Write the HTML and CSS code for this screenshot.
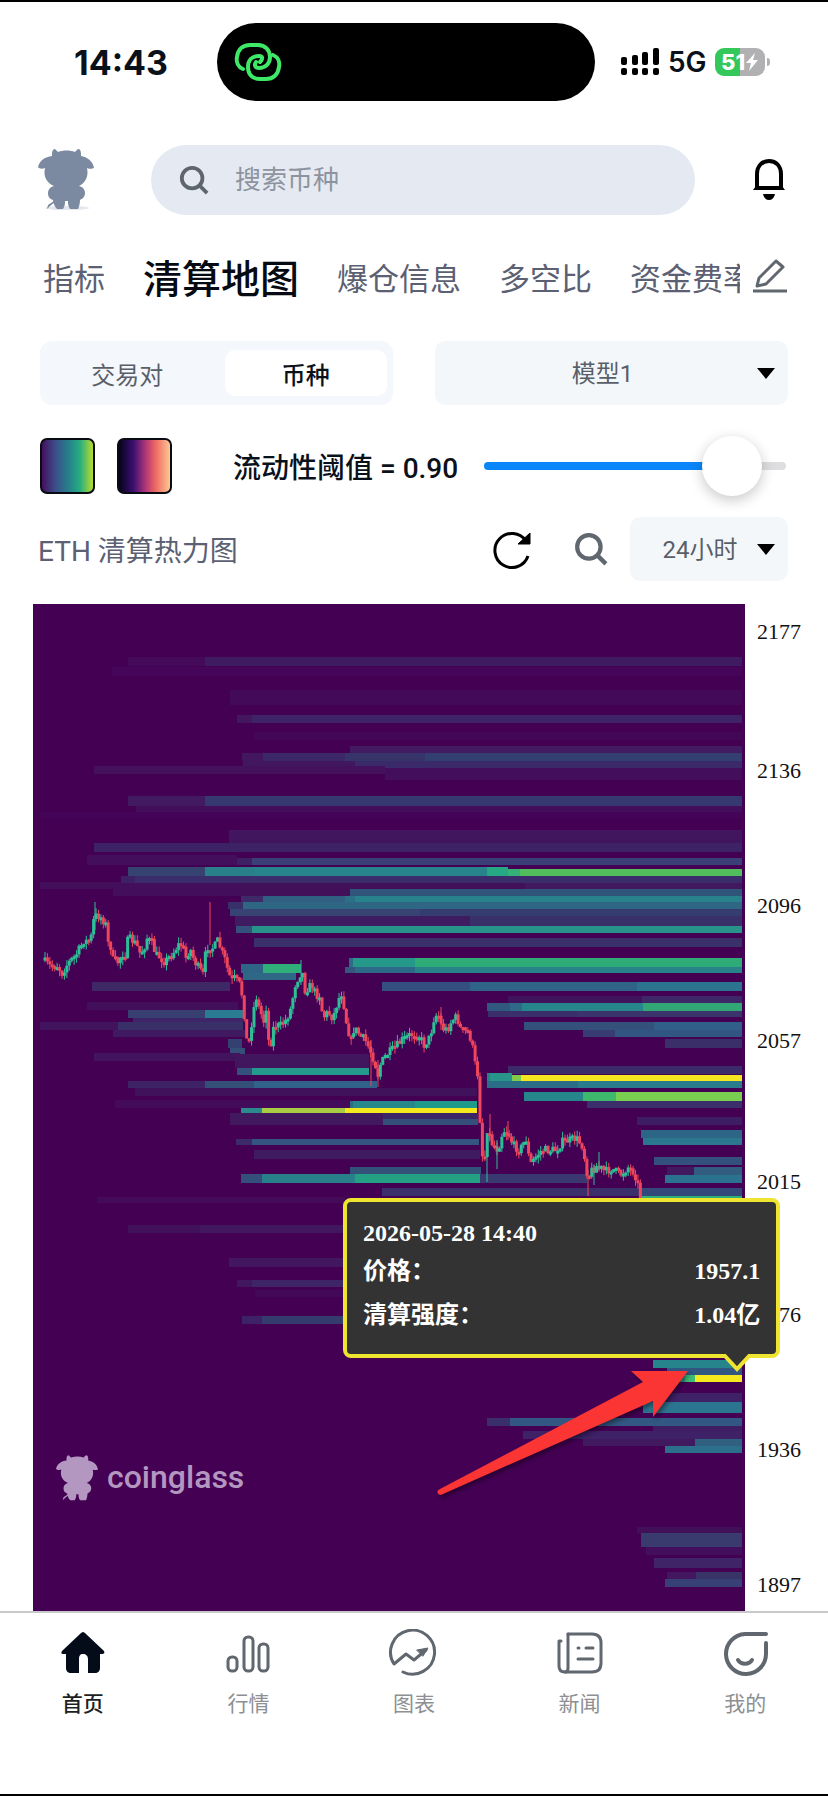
FILE: index.html
```html
<!DOCTYPE html>
<html lang="zh-CN">
<head>
  <meta charset="UTF-8">
  <meta name="viewport" content="width=device-width, initial-scale=1">
  <title>清算地图</title>
  <link rel="stylesheet" href="styles.css">
</head>
<body>
  <svg class="defs" width="0" height="0" aria-hidden="true">
    <symbol id="mascot" viewBox="0 0 56 62">
      <path d="M14 5C14 2 15 0 17 0C18 1 19 2 20 3C25 1 32 1 37 3C38 2 39 0 41 0C43 1 43 4 43 7C49 8 55 12 56 19C54 20 50 20 49 19C51 28 47 34 41 37C45 38 47 41 47 44C47 48 44 50 42 51C42 54 41 58 40 60L32 60C30 57 30 54 30 52L27 52C27 54 27 57 25 60L19 60C17 58 15 54 15 51C12 50 10 48 10 44C10 41 12 38 16 37C9 34 5 28 7 19C5 20 1 20 0 18C2 11 7 8 14 7Z"/>
      <path d="M17 53L12 57L9 60L10 56L16 52Z"/>
    </symbol>
    <symbol id="search" viewBox="0 0 32 32">
      <circle cx="14" cy="14" r="11" fill="none" stroke="currentColor" stroke-width="4"/>
      <path d="M22 22L30 30" stroke="currentColor" stroke-width="4"/>
    </symbol>
  </svg>

  <div class="status-bar">
    <span class="time">14:43</span>
    <div class="island">
      <svg width="48" height="38" viewBox="0 0 48 38" fill="none" stroke="#3fe968" stroke-width="4" stroke-linecap="round">
        <path d="M9 26C4 24 2 19 3 14C4 6 9 2 16 2H24C31 2 36 7 36 14C36 21 31 25 25 25C21 25 20 22 22 19"/>
        <path d="M39 12C44 14 46 19 45 24C44 32 39 36 32 36H26C18 36 14 31 14 24C14 17 18 13 25 13C29 13 29 16 26 19"/>
      </svg>
    </div>
    <div class="signal-group">
      <svg width="40" height="28" viewBox="0 0 40 28">
        <rect x="1" y="9" width="6" height="8" rx="2"/><rect x="12" y="7" width="6" height="10" rx="2"/>
        <rect x="22" y="4" width="6" height="13" rx="2"/><rect x="33" y="0" width="6" height="17" rx="2"/>
        <rect x="1" y="20" width="6" height="7" rx="2"/><rect x="12" y="20" width="6" height="7" rx="2"/>
        <rect x="22" y="20" width="6" height="7" rx="2"/><rect x="33" y="20" width="6" height="7" rx="2"/>
      </svg>
      <span class="network">5G</span>
      <div class="battery">
        <span>51</span>
        <svg width="12" height="18" viewBox="0 0 12 18"><path d="M9 0L0 10H5L3 18L12 7H7Z" fill="#fff"/></svg>
      </div>
    </div>
  </div>

  <header class="top-row">
    <a href="#" class="avatar" aria-label="coinglass">
      <svg width="56" height="62" viewBox="0 0 56 62">
        <ellipse cx="29" cy="59" rx="22" ry="2" fill="#e4e6ee"/>
        <use href="#mascot"/>
      </svg>
    </a>
    <label class="search-box">
      <svg width="30" height="30"><use href="#search"/></svg>
      <input type="text" placeholder="搜索币种" aria-label="搜索币种">
    </label>
    <button class="icon-btn" aria-label="通知">
      <svg width="34" height="42" viewBox="0 0 34 42">
        <path d="M5 30V15C5 7 10 2 17 2S29 7 29 15V30" fill="none" stroke="#000" stroke-width="4"/>
        <path d="M1 31L4 27H30L33 31Z"/>
        <path d="M11 35H23C22 39 20 41 17 41S12 39 11 35Z"/>
      </svg>
    </button>
  </header>

  <nav class="tabs">
    <div class="tab-list">
      <a href="#">指标</a>
      <a href="#" class="current">清算地图</a>
      <a href="#">爆仓信息</a>
      <a href="#">多空比</a>
      <a href="#">资金费率</a>
    </div>
    <button class="icon-btn" aria-label="编辑">
      <svg width="36" height="36" viewBox="0 0 36 36" fill="none" stroke="#61676e" stroke-width="3">
        <path d="M7 20L24 3L31 9L14 26L5 28Z" stroke-linejoin="round"/>
        <path d="M1 33H35"/>
      </svg>
    </button>
  </nav>

  <main>
    <div class="filters">
      <div class="segment">
        <button>交易对</button>
        <button class="on">币种</button>
      </div>
      <div class="select-wrap">
        <select aria-label="模型"><option>模型1</option><option>模型2</option></select>
      </div>
    </div>

    <div class="threshold">
      <button class="swatch viridis" aria-label="Viridis"></button>
      <button class="swatch magma" aria-label="Magma"></button>
      <label for="threshold">流动性阈值 = 0.90</label>
      <input type="range" id="threshold" min="0" max="1" step="0.01" value="0.9">
    </div>

    <div class="chart-head">
      <h1>ETH 清算热力图</h1>
      <button class="icon-btn" aria-label="刷新">
        <svg width="40" height="40" viewBox="0 0 40 40">
          <path d="M34 12A17 17 0 1 0 36 27" fill="none" stroke="#000" stroke-width="3"/>
          <path d="M26 15L38 4V15Z" stroke="#000" stroke-width="1"/>
        </svg>
      </button>
      <button class="icon-btn gray" aria-label="搜索"><svg width="34" height="34"><use href="#search"/></svg></button>
      <div class="select-wrap range">
        <select aria-label="时间范围"><option>24小时</option><option>12小时</option></select>
      </div>
    </div>

    <div class="chart">
      <svg id="heatmap" viewBox="33 604 795 1007">
        <rect x="33" y="604" width="712" height="1007" fill="#440154"/>
        <g id="bands"></g>
        <g id="candles"></g>
        <g fill="#b497c0">
          <svg x="56" y="1455" width="42" height="47"><use href="#mascot"/></svg>
          <text x="107" y="1488" class="brand">coinglass</text>
        </g>
        <g id="axis"></g>
        <path class="arrow" d="M440 1489L643 1382L631 1371H688L653 1417V1401L443 1494C438 1497 435 1491 440 1489Z"/>
      </svg>

      <div class="tooltip">
        <div class="tip-title">2026-05-28 14:40</div>
        <div class="tip-row"><span>价格：</span><span>1957.1</span></div>
        <div class="tip-row"><span>清算强度：</span><span>1.04亿</span></div>
        <svg class="pointer" width="30" height="22" viewBox="0 0 30 22">
          <path d="M3 0H27V4L15 16L3 4Z" fill="#333"/>
          <path d="M2 3L15 17L28 3" fill="none" stroke="#efe430" stroke-width="4"/>
        </svg>
      </div>
    </div>
  </main>

  <nav class="bottom-nav">
    <a href="#" class="current">
      <svg width="48" height="48" viewBox="0 0 48 48">
        <path d="M24 3C25 3 26 4 27 5L45 22C46 24 45 25 43 25H41V39C41 42 39 44 36 44H29V30C29 27 27 25 24 25S20 27 20 30V44H12C9 44 7 42 7 39V25H4C2 25 2 24 3 22L21 5C22 4 23 3 24 3Z" fill="#030c18"/>
      </svg>
      首页
    </a>
    <a href="#">
      <svg width="48" height="48" viewBox="0 0 48 48" fill="none" stroke="#61676e" stroke-width="3">
        <rect x="4" y="28" width="9" height="14" rx="4"/>
        <rect x="20" y="8" width="9" height="34" rx="4"/>
        <rect x="35" y="15" width="9" height="27" rx="4"/>
      </svg>
      行情
    </a>
    <a href="#">
      <svg width="52" height="48" viewBox="0 0 52 48" fill="none" stroke="#61676e" stroke-width="3" stroke-linecap="round" stroke-linejoin="round">
        <path d="M15 42A22 22 0 1 0 6 34L18 24L26 30L38 20" transform="translate(0 1)"/>
        <path d="M29 21L40 19L35 27Z" fill="#61676e" stroke-width="1"/>
      </svg>
      图表
    </a>
    <a href="#">
      <svg width="50" height="48" viewBox="0 0 50 48" fill="none" stroke="#61676e" stroke-width="3" stroke-linecap="round" stroke-linejoin="round">
        <path d="M13 5H37C43 5 46 8 46 14V34C46 40 43 43 37 43H10C6 43 4 41 4 37V12H6"/>
        <path d="M13 5V39C13 41 12 43 10 43"/>
        <path d="M23 19H24M31 19H38M23 30H38"/>
      </svg>
      新闻
    </a>
    <a href="#">
      <svg width="48" height="48" viewBox="0 0 48 48" fill="none" stroke="#61676e" stroke-width="4" stroke-linecap="round">
        <path d="M45 5H24A20 20 0 1 0 45 25V14"/>
        <path d="M17 31C20 36 28 36 31 31"/>
      </svg>
      我的
    </a>
  </nav>

  <script src="chart.js"></script>
</body>
</html>
```
FILE: styles.css
```css
* {
  box-sizing: border-box;
}

body {
  margin: 0;
  min-height: 100vh;
  display: flex;
  flex-direction: column;
  background: #fff;
  border-top: 2px solid #000;
  border-bottom: 2px solid #000;
  font-family: Roboto, "Noto Sans CJK SC", sans-serif;
  color: #0b111b;
}

button,
input,
select {
  font: inherit;
  color: inherit;
  border: 0;
  padding: 0;
  margin: 0;
  background: none;
}

a {
  color: inherit;
  text-decoration: none;
}

svg {
  display: block;
}

.defs {
  position: absolute;
}

.icon-btn {
  display: flex;
  flex: none;
  color: #000;
}

.icon-btn.gray {
  color: #61676e;
}

/* status bar */
.status-bar {
  display: grid;
  grid-template-columns: 217px 1fr 233px;
  align-items: center;
  height: 120px;
  font-family: Inter, sans-serif;
}

.time {
  padding-left: 25px;
  text-align: center;
  font-size: 34px;
  font-weight: 700;
}

.island {
  display: flex;
  align-items: center;
  height: 78px;
  padding-left: 17px;
  border-radius: 39px;
  background: #000;
}

.signal-group {
  display: flex;
  align-items: center;
  gap: 8px;
  padding-left: 25px;
}

.network {
  font-size: 28px;
  font-weight: 600;
}

.battery {
  position: relative;
  display: flex;
  align-items: center;
  justify-content: center;
  gap: 1px;
  width: 50px;
  height: 28px;
  border-radius: 9px;
  background: linear-gradient(90deg, #34c759 51%, #b1b1b3 51%);
  color: #fff;
  font-size: 22px;
  font-weight: 800;
}

.battery::after {
  content: "";
  position: absolute;
  right: -5px;
  top: 10px;
  width: 3px;
  height: 8px;
  border-radius: 0 4px 4px 0;
  background: #b1b1b3;
}

/* search row */
.top-row {
  display: flex;
  align-items: center;
  margin-top: 23px;
  padding: 0 42px 0 38px;
}

.avatar {
  fill: #7b8aa0;
}

.search-box {
  flex: 1;
  display: flex;
  align-items: center;
  gap: 26px;
  height: 70px;
  margin: 0 57px;
  padding: 0 28px;
  border-radius: 35px;
  background: #e5eaf2;
  color: #5d656f;
}

.search-box input {
  flex: 1;
  min-width: 0;
  font-size: 26px;
  outline: none;
}

.search-box input::placeholder {
  color: #8d94a0;
}

/* tabs */
.tabs {
  display: flex;
  align-items: center;
  gap: 12px;
  height: 64px;
  margin-top: 29px;
  padding: 0 40px 0 43px;
}

.tab-list {
  flex: 1;
  display: flex;
  align-items: center;
  gap: 38px;
  overflow: hidden;
  white-space: nowrap;
  font-size: 31px;
  color: #5b6072;
}

.tab-list .current {
  font-size: 39px;
  font-weight: 500;
  color: #060a12;
}

/* filters */
.filters {
  display: grid;
  grid-template-columns: 1fr 1fr;
  gap: 42px;
  margin-top: 33px;
  padding: 0 40px;
}

.segment {
  display: grid;
  grid-template-columns: 1fr 1fr;
  gap: 16px;
  height: 64px;
  padding: 9px 6px;
  border-radius: 12px;
  background: #f4f7fb;
  font-size: 24px;
  color: #595f69;
}

.segment button {
  border-radius: 10px;
}

.segment .on {
  background: #fff;
  color: #0b111b;
  font-weight: 500;
}

.select-wrap {
  position: relative;
  height: 64px;
  border-radius: 10px;
  background: #f4f7fa;
  font-size: 24px;
  color: #595f69;
}

.select-wrap::after {
  content: "";
  position: absolute;
  right: 13px;
  top: 27px;
  width: 18px;
  height: 11px;
  background: #000;
  clip-path: polygon(0 0, 100% 0, 50% 100%);
  pointer-events: none;
}

.select-wrap select {
  appearance: none;
  width: 100%;
  height: 100%;
  text-align: center;
  text-align-last: center;
  padding: 2px 18px 0 0;
}

.range {
  flex: none;
  width: 158px;
}

/* threshold */
.threshold {
  display: flex;
  align-items: center;
  margin-top: 31px;
  padding: 0 42px 0 40px;
}

.swatch {
  width: 55px;
  height: 56px;
  margin-right: 22px;
  border: 2px solid #0a0c14;
  border-radius: 7px;
}

.viridis {
  background: linear-gradient(90deg, #440f5c, #3c4c88 25%, #27808c 52%, #25ac80 74%, #b8dc30);
}

.magma {
  background: linear-gradient(90deg, #05041a, #3a0f70 28%, #b03578 52%, #ee6a62 72%, #fdc796);
}

.threshold label {
  margin-left: 39px;
  margin-right: 26px;
  font-size: 28px;
  font-weight: 500;
  white-space: nowrap;
}

.threshold input {
  appearance: none;
  flex: 1;
  min-width: 0;
  height: 60px;
}

.threshold input::-webkit-slider-runnable-track {
  height: 8px;
  border-radius: 4px;
  background: linear-gradient(90deg, #0a86fb 82%, #dedee0 82%);
}

.threshold input::-webkit-slider-thumb {
  appearance: none;
  width: 60px;
  height: 60px;
  margin-top: -26px;
  border-radius: 50%;
  background: #fff;
  box-shadow: 0 4px 14px rgba(0, 0, 0, 0.22);
}

/* chart title row */
.chart-head {
  display: flex;
  align-items: center;
  margin-top: 21px;
  padding: 0 40px 0 38px;
}

.chart-head h1 {
  flex: 1;
  margin: 0;
  font-size: 28px;
  font-weight: 400;
  color: #5b6072;
}

.chart-head .icon-btn {
  margin-right: 42px;
}

.chart-head .icon-btn.gray {
  margin-right: 22px;
}

/* chart */
.chart {
  position: relative;
  margin: 23px 0 0 33px;
}

#heatmap {
  width: 100%;
  height: auto;
}

#axis {
  font: 22px "Liberation Serif", serif;
  fill: #111;
}

.brand {
  font-family: Roboto, sans-serif;
  font-size: 32px;
  font-weight: 500;
}

.arrow {
  fill: #fb3434;
  filter: drop-shadow(2px 3px 2px rgba(0, 0, 0, 0.4));
}

.tooltip {
  position: absolute;
  right: 6%;
  top: 59%;
  width: 55%;
  height: 160px;
  padding: 15px 16px;
  border: 4px solid #efe430;
  border-radius: 8px;
  background: #333;
  color: #fff;
  font: 700 24px "Liberation Serif", "Noto Sans CJK SC", serif;
}

.tip-title {
  line-height: 32px;
}

.tip-row {
  display: flex;
  justify-content: space-between;
  line-height: 44px;
}

.pointer {
  position: absolute;
  right: 24px;
  top: 150px;
}

/* bottom nav */
.bottom-nav {
  display: flex;
  flex: 1;
  padding-top: 16px;
  border-top: 2px solid #c9c9cb;
}

.bottom-nav a {
  flex: 1;
  display: flex;
  flex-direction: column;
  align-items: center;
  gap: 10px;
  font-size: 21px;
  color: #8d8f92;
}

.bottom-nav .current {
  color: #1c1f24;
  font-weight: 500;
}
```
FILE: chart.js
```js
const NS = 'http://www.w3.org/2000/svg';
const RIGHT = 742;

// y, height, end x, then pairs of start x and colour
const bands = [
  [657, 9, RIGHT, 128, '#450b5a', 205, '#3f1c62'],
  [667, 9, RIGHT, 112, '#450558'],
  [690, 15, RIGHT, 230, '#420a58'],
  [715, 8, RIGHT, 237, '#43175e', 252, '#3e2366'],
  [732, 8, RIGHT, 254, '#440656'],
  [746, 7, RIGHT, 350, '#421b63'],
  [753, 8, RIGHT, 242, '#42175f', 263, '#3c2868', 345, '#363468', 425, '#333f71'],
  [761, 7, RIGHT, 243, '#41175f', 355, '#3b2a69'],
  [766, 8, 385, 94, '#44125c'],
  [768, 12, RIGHT, 385, '#430f5c'],
  [796, 10, RIGHT, 128, '#421a61', 205, '#36396f'],
  [806, 7, RIGHT, 136, '#430f5c'],
  [812, 6, RIGHT, 40, '#440457'],
  [830, 13, RIGHT, 229, '#41165e'],
  [843, 9, RIGHT, 94, '#3d2366'],
  [855, 10, 237, 87, '#430e5b'],
  [858, 7, RIGHT, 237, '#3e2065', 252, '#3a3f77'],
  [867, 9, 508, 128, '#36426f', 205, '#29808a', 254, '#27848c', 487, '#27a884'],
  [869, 7, RIGHT, 508, '#34b078', 520, '#52bd5c'],
  [876, 7, RIGHT, 121, '#3e2065', 135, '#3b2d6b'],
  [882, 7, 120, 40, '#430f5b'],
  [883, 6, RIGHT, 113, '#430f5c', 240, '#421059', 525, '#40195f'],
  [889, 7, RIGHT, 113, '#430f5c', 240, '#421059', 350, '#30557b'],
  [896, 6, RIGHT, 241, '#3e2a69', 263, '#315f82', 345, '#2c7088', 355, '#27828c'],
  [902, 7, RIGHT, 228, '#3a3069', 243, '#2f6684'],
  [909, 7, RIGHT, 230, '#364373', 420, '#353d70'],
  [916, 10, RIGHT, 235, '#3f1c62', 470, '#392f69'],
  [926, 7, RIGHT, 236, '#33517a', 252, '#28938a'],
  [938, 9, RIGHT, 254, '#3a316b'],
  [958, 9, RIGHT, 349, '#2b6d85', 353, '#26988a', 415, '#2fab78'],
  [967, 6, RIGHT, 345, '#355681', 355, '#2c6a87', 415, '#27828a'],
  [964, 9, 301, 241, '#2e6486', 263, '#2fae7a'],
  [973, 7, 296, 243, '#2f6886'],
  [982, 9, 230, 92, '#3e2865'],
  [982, 9, RIGHT, 382, '#335080', 470, '#2f6488', 637, '#2c7390'],
  [1002, 8, 238, 87, '#420f5b'],
  [1010, 8, 243, 128, '#374070', 205, '#2a7c92'],
  [1018, 5, 243, 133, '#3e2468'],
  [1022, 8, 243, 40, '#42145d', 118, '#3a3069'],
  [1030, 7, 245, 113, '#401a60'],
  [1039, 9, 242, 228, '#344170'],
  [1048, 6, 245, 230, '#355078'],
  [1053, 8, 240, 94, '#42145d'],
  [1054, 14, 369, 235, '#41165e'],
  [1068, 7, 369, 237, '#33517a', 252, '#239a8b'],
  [1081, 7, 377, 128, '#3d2366', 205, '#345078', 254, '#30628a'],
  [1088, 8, 477, 135, '#41125c'],
  [1100, 8, 350, 115, '#430b5a'],
  [1101, 7, 477, 350, '#2b6d85', 353, '#27888c', 415, '#1f9a8a'],
  [1108, 5, 477, 241, '#2a8a8c', 262, '#a9cc45', 345, '#f5e81f'],
  [1113, 12, 478, 230, '#42185f', 383, '#3b2668'],
  [1119, 6, 478, 383, '#34507a'],
  [1139, 6, 479, 236, '#3c2a69', 252, '#345580'],
  [1150, 9, 480, 254, '#3f1c62'],
  [1167, 7, 481, 350, '#33527a'],
  [1174, 9, 587, 241, '#34507a', 262, '#27808a', 355, '#24a084', 480, '#393871'],
  [1188, 8, RIGHT, 382, '#3a2f6a', 640, '#33487a'],
  [1196, 6, RIGHT, 641, '#2fae7a'],
  [1197, 6, 345, 97, '#430b5a'],
  [1225, 8, 345, 128, '#42115c', 200, '#41175f'],
  [1258, 9, 345, 229, '#421760'],
  [1280, 7, 345, 237, '#41175f', 252, '#3d2568'],
  [1290, 7, 345, 255, '#440858'],
  [1316, 8, 345, 242, '#3d2366', 262, '#363b6d'],
  [996, 8, RIGHT, 508, '#40145d', 642, '#3d2768'],
  [1003, 8, RIGHT, 487, '#31597f', 510, '#2f6a88', 522, '#26868c', 643, '#33a676'],
  [1011, 6, RIGHT, 488, '#3b2f6b', 578, '#3b336c'],
  [1022, 8, RIGHT, 524, '#34517b', 654, '#30608a'],
  [1030, 7, RIGHT, 583, '#393c73', 615, '#315681'],
  [1039, 9, RIGHT, 665, '#3b2f6a'],
  [1066, 8, RIGHT, 508, '#3b2b69'],
  [1073, 8, 512, 487, '#2a8088', 490, '#28948a'],
  [1075, 6, RIGHT, 512, '#80cb4c', 521, '#f5e520'],
  [1081, 7, RIGHT, 487, '#2b6c87', 578, '#2a7c8c'],
  [1092, 9, RIGHT, 524, '#25868b', 583, '#3eb86c', 616, '#78cf50'],
  [1101, 7, RIGHT, 587, '#3a2f6a'],
  [1117, 8, RIGHT, 637, '#3f1d63'],
  [1130, 8, RIGHT, 641, '#2c6586'],
  [1138, 7, RIGHT, 643, '#2b7790'],
  [1157, 8, RIGHT, 654, '#34507c'],
  [1167, 8, RIGHT, 667, '#40195f', 694, '#305d80'],
  [1175, 8, RIGHT, 665, '#2b7290'],
  [1360, 8, RIGHT, 653, '#26848c'],
  [1368, 7, RIGHT, 667, '#315682'],
  [1375, 7, RIGHT, 653, '#2a9a86', 685, '#3ebc74', 695, '#f5e81f'],
  [1393, 9, RIGHT, 640, '#3e2167'],
  [1402, 11, RIGHT, 643, '#2c7590'],
  [1418, 8, RIGHT, 487, '#3a2f6a', 510, '#315782'],
  [1426, 7, RIGHT, 653, '#3f1d63'],
  [1431, 8, RIGHT, 523, '#3e2167'],
  [1439, 7, RIGHT, 583, '#40195f', 695, '#306080'],
  [1446, 7, RIGHT, 665, '#2c6f8c'],
  [1527, 6, RIGHT, 637, '#421059'],
  [1533, 14, RIGHT, 641, '#393a6e'],
  [1547, 8, RIGHT, 646, '#430f5c'],
  [1558, 10, RIGHT, 654, '#3f2468'],
  [1572, 8, RIGHT, 667, '#42175f', 696, '#393468'],
  [1579, 8, RIGHT, 665, '#374175']
];

// closing price path
const closes = [
  [45, 962], [50, 966], [57, 965], [62, 973], [66, 966], [70, 961], [76, 955], [80, 948], [84, 940],
  [88, 942], [92, 935], [94, 917], [98, 915], [102, 918], [106, 925], [108, 943], [111, 947],
  [113, 960], [118, 962], [122, 953], [126, 955], [128, 938], [132, 940], [136, 944], [140, 953],
  [144, 948], [147, 938], [152, 943], [156, 955], [160, 957], [165, 962], [169, 957], [173, 953],
  [178, 945], [182, 944], [186, 958], [190, 948], [194, 960], [198, 967], [202, 973], [204, 976],
  [206, 946], [210, 947], [214, 948], [218, 940], [221, 950], [225, 960], [229, 975], [232, 980],
  [235, 978], [240, 985], [243, 1000], [246, 1035], [248, 1050], [252, 1020], [256, 995], [259, 1008],
  [264, 1022], [266, 1005], [268, 1040], [271, 1042], [274, 1025], [280, 1026], [286, 1020], [291, 1008],
  [295, 985], [298, 978], [302, 970], [305, 990], [312, 985], [316, 995], [320, 995], [323, 1018],
  [328, 1012], [333, 1018], [338, 1000], [342, 992], [346, 1020], [351, 1042], [354, 1028], [360, 1035],
  [365, 1040], [370, 1050], [374, 1060], [378, 1075], [380, 1065], [386, 1055], [395, 1048], [402, 1040],
  [410, 1035], [418, 1033], [424, 1045], [430, 1037], [434, 1018], [438, 1013], [442, 1028], [447, 1030],
  [452, 1020], [457, 1017], [461, 1030], [469, 1032], [473, 1050], [475, 1064], [477, 1064], [480, 1120],
  [481, 1145], [484, 1167], [487, 1128], [492, 1143], [498, 1150], [503, 1130], [508, 1132], [513, 1145],
  [520, 1150], [526, 1138], [530, 1165], [537, 1155], [542, 1150], [550, 1150], [556, 1150], [562, 1142],
  [570, 1140], [576, 1138], [582, 1145], [585, 1160], [588, 1178], [592, 1170], [598, 1165], [605, 1172],
  [612, 1168], [620, 1175], [628, 1167], [634, 1172], [637, 1180], [641, 1202]
];

// long wicks: x, top, bottom, rising
const spikes = [
  [95, 902, 930, 1], [210, 902, 945, 0], [301, 960, 985, 1], [371, 1040, 1086, 0], [378, 1060, 1087, 0],
  [441, 1007, 1030, 0], [490, 1114, 1140, 0], [487, 1140, 1182, 1], [497, 1140, 1169, 1],
  [508, 1121, 1140, 0], [588, 1170, 1196, 0], [594, 1165, 1185, 1], [599, 1152, 1170, 1]
];

const levels = [
  [2177, 632], [2136, 771], [2096, 906], [2057, 1041],
  [2015, 1182], [1976, 1315], [1936, 1450], [1897, 1585]
];

function draw(parent, name, attrs) {
  const el = document.createElementNS(NS, name);
  for (const key in attrs) el.setAttribute(key, attrs[key]);
  parent.appendChild(el);
  return el;
}

function rect(parent, x, y, width, height, fill) {
  draw(parent, 'rect', { x, y, width, height, fill });
}

const bandLayer = document.getElementById('bands');
bands.forEach(([y, h, end, ...steps]) => {
  for (let i = 0; i < steps.length; i += 2) {
    const next = i + 2 < steps.length ? steps[i + 2] : end;
    rect(bandLayer, steps[i], y, next - steps[i], h, steps[i + 1]);
  }
});

function priceAt(x) {
  for (let i = 1; i < closes.length; i++) {
    const [x0, y0] = closes[i - 1];
    const [x1, y1] = closes[i];
    if (x <= x1) return y0 + (y1 - y0) * (x - x0) / (x1 - x0);
  }
  return closes[closes.length - 1][1];
}

const UP = '#2cc096';
const DOWN = '#ee465c';
const candleLayer = document.getElementById('candles');
let seed = 7;
function rand() {
  seed = (seed * 16807) % 2147483647;
  return seed / 2147483647;
}

let open = 960;
for (let x = 45; x <= 641; x += 2.43) {
  const close = priceAt(x) + (rand() - 0.5) * 9;
  const color = close < open ? UP : DOWN;
  const top = Math.min(open, close);
  const height = Math.max(3, Math.abs(close - open));
  const above = rand() * 6;
  const below = rand() * 6;
  rect(candleLayer, x - 0.5, top - above, 1, height + above + below, color);
  rect(candleLayer, x - 1.5, top, 3, height, color);
  open = close;
}
spikes.forEach(([x, top, bottom, up]) => {
  rect(candleLayer, x - 0.5, top, 1, bottom - top, up ? UP : DOWN);
});

const axis = document.getElementById('axis');
levels.forEach(([price, y]) => {
  draw(axis, 'text', { x: 757, y: y + 7 }).textContent = price;
});
```
